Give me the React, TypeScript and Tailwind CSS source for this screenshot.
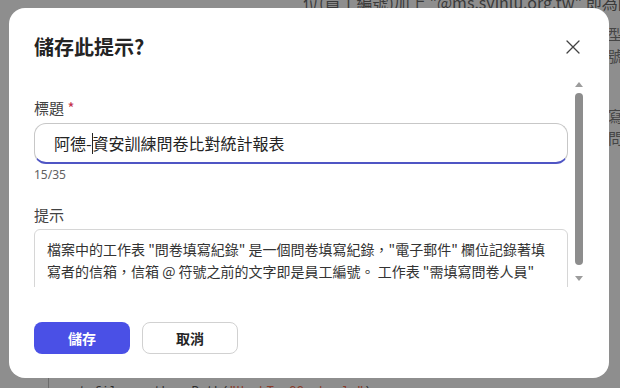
import React from "react";

const cjk = "font-['Noto_Sans_CJK_TC','Noto_Sans',sans-serif]";

function CloseIcon() {
  return (
    <svg width="14" height="14" viewBox="0 0 14 14" className="text-[#424242]">
      <path d="M1 1L13 13M13 1L1 13" stroke="currentColor" strokeWidth="1.3" strokeLinecap="round" />
    </svg>
  );
}

function FakeScrollbar() {
  return (
    <div className="w-[8px] shrink-0 flex flex-col items-center pt-[2px]">
      <svg width="8" height="5" viewBox="0 0 8 5">
        <path d="M4 0L8 5H0Z" fill="#9c9c9c" />
      </svg>
      <div className="mt-[6px] w-[8px] h-[172px] rounded-full bg-[#8d8d8d]" />
      <svg width="8" height="5" viewBox="0 0 8 5" className="mt-[11px]">
        <path d="M0 0H8L4 5Z" fill="#9c9c9c" />
      </svg>
    </div>
  );
}

export default function App() {
  return (
    <div className={`relative w-[620px] h-[388px] overflow-hidden bg-[#8e8e8e] ${cjk}`}>
      {/* page content behind the overlay */}
      <div className="absolute left-[303px] top-[-10px] whitespace-nowrap text-[16px] leading-[24px] text-[#3a3a3a]">
        位(員工編號)加上 "@ms.syinlu.org.tw" 即為同
      </div>
      <div className="absolute left-[608px] top-[23px] flex flex-col text-[15px] leading-[22px] text-[#454545]">
        <span>型</span>
        <span>號</span>
        <span className="mt-[38px]">寫</span>
        <span>問</span>
      </div>
      <div className="absolute left-[48px] top-[378px] h-[10px] border-l border-[#6c6c6c]" />
      <div className="absolute left-[79px] top-[383px] whitespace-nowrap font-['Liberation_Mono',monospace] text-[12.5px] leading-[18px] text-[#2e2e2e]">
        t_file = other.Path(<span className="text-[#8a3b2a]">"HashTo_22_sh.xls"</span>)
      </div>

      {/* dialog */}
      <div className="absolute left-[9px] top-[8px] w-[600px] h-[370px] rounded-2xl bg-white pl-[25px] pr-[26px] pt-[25px] flex flex-col">
        <div className="flex items-center justify-between h-[28px] pr-[3px]">
          <h2 className="text-[20px] leading-[28px] font-bold text-[#242424]">儲存此提示?</h2>
          <CloseIcon />
        </div>

        <div className="mt-[19px] h-[207px] flex gap-[7px]">
          <div className="w-[534px] overflow-hidden pt-[17px]">
            <div className="text-[15px] leading-[21px] text-[#424242]">
              標題 <span className="text-[#c4314b]">*</span>
            </div>
            <div className="mt-[5px] h-[41px] rounded-xl border border-[#c7c7c7] border-b-2 border-b-[#4f55c4] flex items-center pl-[19px] text-[16px] text-[#242424]">
              <span>阿德-</span>
              <span className="inline-block w-px h-[21px] bg-[#242424]" />
              <span>資安訓練問卷比對統計報表</span>
            </div>
            <div className="mt-[3px] font-['Noto_Sans',sans-serif] text-[12px] leading-[16px] text-[#616161]">15/35</div>
            <div className="mt-[21px] text-[15px] leading-[21px] text-[#424242]">提示</div>
            <div className="mt-[4px] h-[90px] rounded-t-md border border-[#d6d6d6] pl-[12px] pt-[8px] text-[14px] leading-[22px] text-[#333333] whitespace-nowrap">
              <div>檔案中的工作表 "問卷填寫紀錄" 是一個問卷填寫紀錄，"電子郵件" 欄位記錄著填</div>
              <div>寫者的信箱，信箱 @ 符號之前的文字即是員工編號。 工作表 "需填寫問卷人員"</div>
            </div>
          </div>
          <FakeScrollbar />
        </div>

        <div className="mt-[35px] flex gap-[12px]">
          <button className="w-[96px] h-[32px] rounded-lg bg-[#4a50e6] text-white text-[14px] font-bold">
            儲存
          </button>
          <button className="w-[96px] h-[32px] rounded-lg border border-[#d1d1d1] bg-white text-[#242424] text-[14px] font-bold">
            取消
          </button>
        </div>
      </div>
    </div>
  );
}
